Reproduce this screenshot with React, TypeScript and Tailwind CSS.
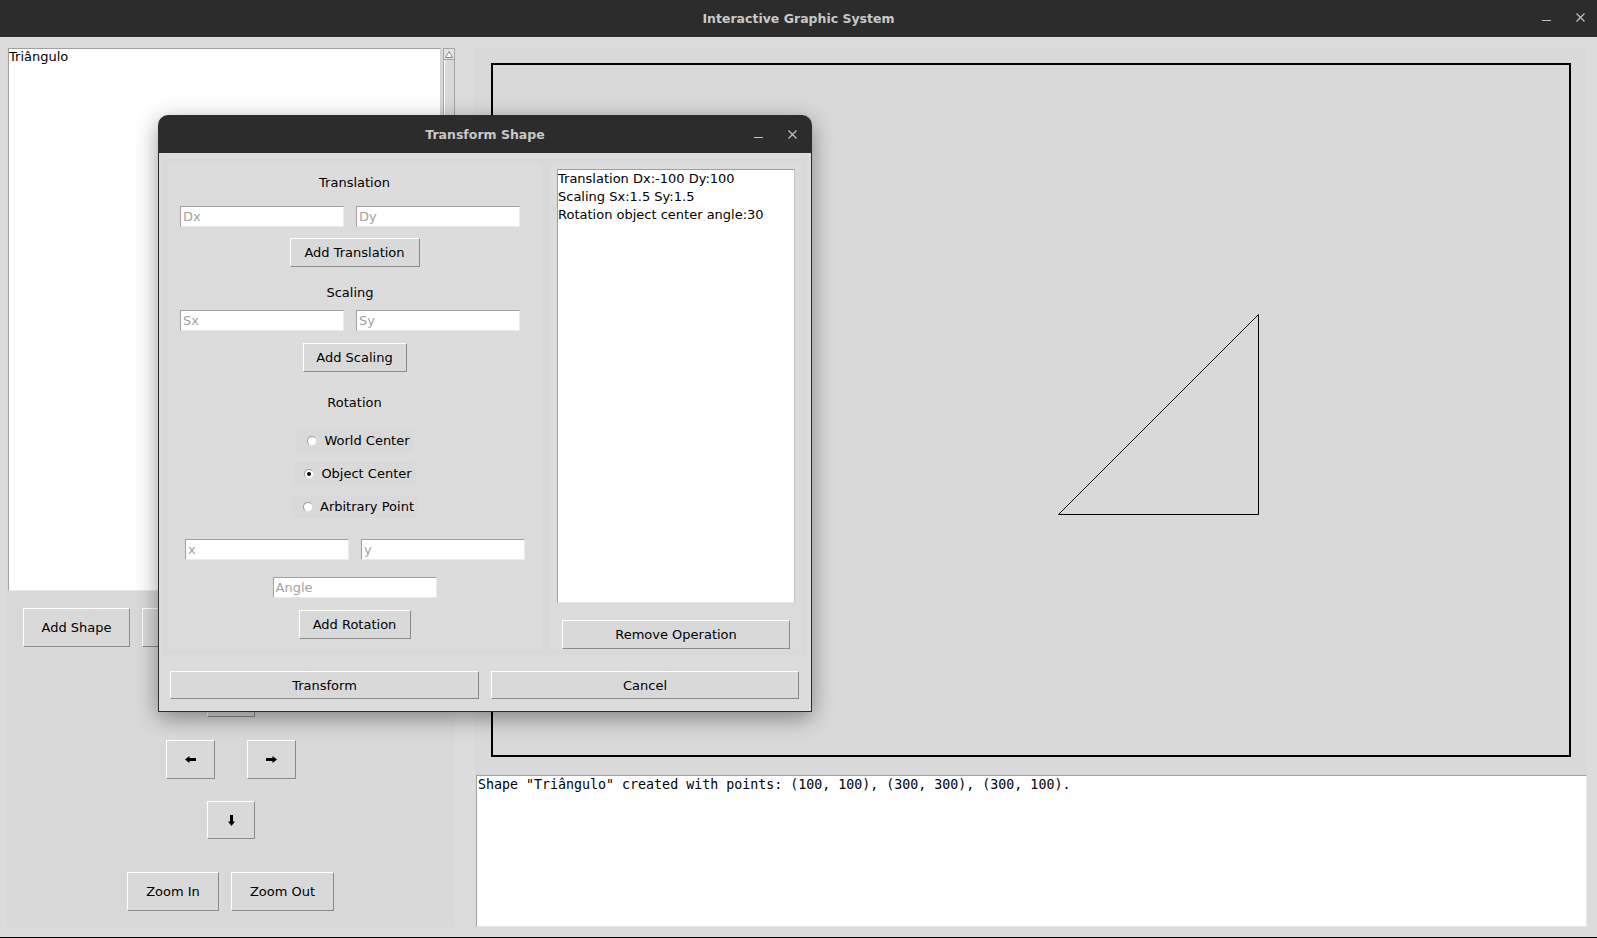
import type { FC, ReactNode } from "react";

const TkButton: FC<{ className?: string; children?: ReactNode }> = ({ className = "", children }) => (
  <div
    className={`flex shrink-0 items-center justify-center border border-t-white border-l-white border-r-[#8a8a8a] border-b-[#8a8a8a] bg-[#d9d9d9] text-[13px] leading-none text-black ${className}`}
  >
    {children}
  </div>
);

const Entry: FC<{ placeholder: string; className?: string }> = ({ placeholder, className = "" }) => (
  <div
    className={`flex h-[21px] w-[164px] shrink-0 items-center border border-t-[#a0a0a0] border-l-[#a0a0a0] border-r-[#ececec] border-b-[#ececec] bg-white pl-[2px] text-[13px] text-[#a3a3a3] ${className}`}
  >
    {placeholder}
  </div>
);

const Radio: FC<{ label: string; checked?: boolean; className?: string }> = ({ label, checked, className = "" }) => (
  <div className={`mx-auto flex h-[23px] w-fit items-center gap-[7px] bg-[#d9d9d9] pr-[3px] ${className}`}>
    <span className="grid h-[10px] w-[10px] place-items-center rounded-full border border-t-[#9a9a9a] border-l-[#9a9a9a] border-r-[#dedede] border-b-[#dedede] bg-white">
      {checked && <span className="h-[4px] w-[4px] rounded-full bg-black" />}
    </span>
    <span className="text-[13px] leading-none">{label}</span>
  </div>
);

const Arrow: FC<{ dir: "up" | "down" | "left" | "right" }> = ({ dir }) => {
  if (dir === "left" || dir === "right") {
    return (
      <svg width="11" height="7" viewBox="0 0 11 7" className={dir === "right" ? "-scale-x-100" : ""}>
        <polygon points="0,3.5 4.5,0 4.5,7" fill="black" />
        <rect x="4" y="2" width="7" height="3" fill="black" />
      </svg>
    );
  }
  return (
    <svg width="7" height="11" viewBox="0 0 7 11" className={dir === "up" ? "-scale-y-100" : ""}>
      <rect x="2" y="0" width="3" height="7" fill="black" />
      <polygon points="0,6.5 7,6.5 3.5,11" fill="black" />
    </svg>
  );
};

const WindowControls: FC = () => (
  <div className="flex items-center gap-[25px]">
    <svg width="9" height="9" viewBox="0 0 9 9">
      <line x1="0" y1="7.5" x2="9" y2="7.5" stroke="#c4c4c4" strokeWidth="1" />
    </svg>
    <svg width="9" height="9" viewBox="0 0 9 9">
      <path d="M0.5 0.5 L8.5 8.5 M8.5 0.5 L0.5 8.5" stroke="#c4c4c4" strokeWidth="1.2" />
    </svg>
  </div>
);

export default function App() {
  return (
    <div className="relative flex h-[938px] w-[1597px] flex-col overflow-hidden bg-[#dcdcdc] font-['DejaVu_Sans',sans-serif] text-[13px] text-black">
      {/* main title bar */}
      <div className="relative flex h-[37px] shrink-0 items-center justify-center bg-[#2c2c2c] pt-[2px]">
        <span className="text-[12.5px] font-bold text-[#c8c8c8]">Interactive Graphic System</span>
        <div className="absolute right-[12px] top-[13px]">
          <WindowControls />
        </div>
      </div>

      <div className="flex flex-1 pl-[7px] pt-[10px]">
        {/* left panel */}
        <div className="flex h-[880px] w-[448px] flex-col bg-[#d9d9d9]">
          <div className="flex gap-[2px] pl-[1px] pt-[1px]">
            <div className="h-[543px] w-[433px] border border-t-[#a0a0a0] border-l-[#a0a0a0] border-r-[#d0d0d0] border-b-[#e6e6e6] bg-white leading-[16px]">
              <div>Triângulo</div>
            </div>
            <div className="flex h-[543px] w-[12px] flex-col border border-[#a3a3a3] bg-[#d9d9d9]">
              <div className="flex h-[11px] items-center justify-center border-b border-[#a3a3a3] bg-[#e4e4e4]">
                <svg width="8" height="7" viewBox="0 0 8 7">
                  <polygon points="4,0.5 7.5,6.5 0.5,6.5" fill="white" stroke="#8a8a8a" strokeWidth="1" />
                </svg>
              </div>
              <div className="flex-1 border-l border-white" />
            </div>
          </div>

          <div className="mt-[17px] flex gap-[12px] pl-[16px]">
            <TkButton className="h-[39px] w-[107px]">Add Shape</TkButton>
            <TkButton className="h-[39px] w-[292px]" />
          </div>

          <div className="mt-[32px] flex justify-center">
            <TkButton className="h-[38px] w-[48px]">
              <Arrow dir="up" />
            </TkButton>
          </div>
          <div className="mt-[23px] flex justify-center gap-[32px]">
            <TkButton className="h-[39px] w-[49px]">
              <Arrow dir="left" />
            </TkButton>
            <TkButton className="h-[39px] w-[49px]">
              <Arrow dir="right" />
            </TkButton>
          </div>
          <div className="mt-[22px] flex justify-center">
            <TkButton className="h-[38px] w-[48px]">
              <Arrow dir="down" />
            </TkButton>
          </div>
          <div className="mt-[33px] flex justify-center gap-[12px] pr-[1px]">
            <TkButton className="h-[39px] w-[92px]">Zoom In</TkButton>
            <TkButton className="h-[39px] w-[103px]">Zoom Out</TkButton>
          </div>
        </div>

        {/* right side: canvas + log */}
        <div className="ml-[20px] flex w-[1112px] flex-col">
          <div className="h-[728px] bg-[#d9d9d9] pl-[16px] pt-[16px]">
            <div className="relative h-[694px] w-[1080px] border-2 border-black">
              <svg className="absolute inset-0" width="1076" height="690">
                <polygon points="565.5,449.5 765.5,249.5 765.5,449.5" fill="none" stroke="black" strokeWidth="1" />
              </svg>
            </div>
          </div>
          <div className="ml-[1px] h-[152px] w-[1111px] border border-t-[#a0a0a0] border-l-[#a0a0a0] border-r-[#e6e6e6] border-b-[#e6e6e6] bg-white pl-[1px] font-['DejaVu_Sans_Mono',monospace] text-[13.3px] leading-[18px]">
            Shape "Triângulo" created with points: (100, 100), (300, 300), (300, 100).
          </div>
        </div>
      </div>
      <div className="h-[1px] shrink-0 bg-black" />

      {/* Transform Shape dialog */}
      <div className="absolute left-[158px] top-[115px] flex h-[597px] w-[654px] flex-col overflow-hidden rounded-t-[10px] shadow-[0_6px_22px_rgba(0,0,0,0.4)]">
        <div className="relative flex h-[38px] shrink-0 items-center justify-center bg-[#2c2c2c] pt-[2px]">
          <span className="text-[12.5px] font-bold text-[#c8c8c8]">Transform Shape</span>
          <div className="absolute right-[15px] top-[15px]">
            <WindowControls />
          </div>
        </div>
        <div className="flex flex-1 flex-col border-x border-b border-[#2c2c2c] bg-[#dcdcdc]">
          <div className="ml-[4px] mt-[5px] flex h-[497px] w-[644px] gap-[10px] bg-[#d9d9d9] pl-[5px] pt-[5px]">
            {/* left group */}
            <div className="flex h-[487px] w-[373px] flex-col bg-[#dcdcdc]">
              <div className="mt-[11px] text-center leading-[18px]">Translation</div>
              <div className="mt-[14px] flex gap-[12px] pl-[12px]">
                <Entry placeholder="Dx" />
                <Entry placeholder="Dy" />
              </div>
              <div className="mt-[11px] flex justify-center">
                <TkButton className="h-[29px] w-[130px]">Add Translation</TkButton>
              </div>
              <div className="mt-[17px] pr-[9px] text-center leading-[18px]">Scaling</div>
              <div className="mt-[8px] flex gap-[12px] pl-[12px]">
                <Entry placeholder="Sx" />
                <Entry placeholder="Sy" />
              </div>
              <div className="mt-[12px] flex justify-center">
                <TkButton className="h-[29px] w-[104px]">Add Scaling</TkButton>
              </div>
              <div className="mt-[22px] text-center leading-[18px]">Rotation</div>
              <Radio className="mt-[17px] pl-[11px]" label="World Center" />
              <Radio className="mt-[10px] pl-[10px]" label="Object Center" checked />
              <Radio className="mt-[10px] pl-[11px]" label="Arbitrary Point" />
              <div className="mt-[21px] flex gap-[12px] pl-[17px]">
                <Entry placeholder="x" />
                <Entry placeholder="y" />
              </div>
              <div className="mt-[17px] flex justify-center">
                <Entry placeholder="Angle" />
              </div>
              <div className="mt-[12px] flex justify-center">
                <TkButton className="h-[29px] w-[112px]">Add Rotation</TkButton>
              </div>
            </div>

            {/* right group */}
            <div className="flex h-[487px] w-[251px] flex-col bg-[#dcdcdc] pl-[6px] pt-[6px]">
              <div className="h-[434px] w-[238px] border border-t-[#a0a0a0] border-l-[#a0a0a0] border-r-[#c4c4c4] border-b-[#e4e4e4] bg-white leading-[18px]">
                <div>Translation Dx:-100 Dy:100</div>
                <div>Scaling Sx:1.5 Sy:1.5</div>
                <div>Rotation object center angle:30</div>
              </div>
              <TkButton className="ml-[5px] mt-[17px] h-[29px] w-[228px]">Remove Operation</TkButton>
            </div>
          </div>

          <div className="mt-[16px] flex gap-[12px] pl-[11px]">
            <TkButton className="h-[28px] w-[309px]">Transform</TkButton>
            <TkButton className="h-[28px] w-[308px]">Cancel</TkButton>
          </div>
        </div>
      </div>
    </div>
  );
}
